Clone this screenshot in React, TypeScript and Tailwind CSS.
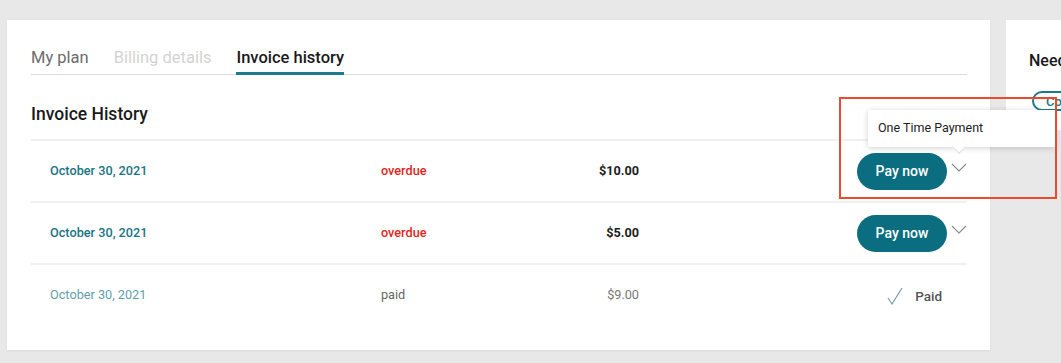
import { type ReactNode } from "react";

type Invoice = {
  date: string;
  status: "overdue" | "paid";
  amount: string;
};

const invoices: Invoice[] = [
  { date: "October 30, 2021", status: "overdue", amount: "$10.00" },
  { date: "October 30, 2021", status: "overdue", amount: "$5.00" },
  { date: "October 30, 2021", status: "paid", amount: "$9.00" },
];

const Chevron = () => (
  <svg width="16" height="9" viewBox="0 0 16 9" className="ml-[4px] -mt-[8px]">
    <polyline points="1,1 8,8 15,1" fill="none" stroke="#8a8a8a" strokeWidth="1.1" />
  </svg>
);

const Tooltip = () => (
  <div className="absolute right-[-88px] top-[-31px] w-[187px] h-[37px] bg-white shadow-[0_1px_6px_rgba(0,0,0,0.18)] flex items-center pl-[10px] text-[12.5px] text-[#222] z-10">
    One Time Payment
    <div className="absolute left-[86px] bottom-[-5px] w-[10px] h-[10px] bg-white rotate-45 border-r border-b border-[#e2e2e2]" />
  </div>
);

const Row = ({ invoice, children }: { invoice: Invoice; children?: ReactNode }) => {
  const paid = invoice.status === "paid";
  return (
    <div className="relative flex items-center h-[62px] border-t-2 border-[#f0f0f0] pl-[19px] text-[12.7px]">
      <div
        className={
          paid
            ? "w-[331px] text-[#5f9fac]"
            : "w-[331px] text-[#1b7486] font-medium"
        }
      >
        {invoice.date}
      </div>
      <div className={paid ? "w-[150px] text-[#666]" : "w-[150px] text-[#e1261c] font-medium"}>
        {invoice.status}
      </div>
      <div className={paid ? "w-[108px] text-right text-[#777]" : "w-[108px] text-right text-[#1d1d1d] font-bold"}>
        {invoice.amount}
      </div>
      <div className="flex-1 flex justify-end items-center">
        {paid ? (
          <div className="flex items-center mr-[25px] mt-[2px]">
            <svg width="16" height="18" viewBox="0 0 16 18">
              <polyline points="1,11 5,17 15,1" fill="none" stroke="#6b9aa5" strokeWidth="1.1" />
            </svg>
            <span className="ml-[12px] text-[13.5px] font-medium text-[#555]">Paid</span>
          </div>
        ) : (
          <div className="flex items-center">
            <button className="w-[90px] h-[37px] rounded-full bg-[#0b6e80] text-white text-[14px] font-medium">
              Pay now
            </button>
            <Chevron />
          </div>
        )}
      </div>
      {children}
    </div>
  );
};

export default function App() {
  return (
    <div className="relative w-[1061px] h-[363px] overflow-hidden bg-[#e8e8e8] font-['Roboto',sans-serif]">
      <div className="flex items-start gap-[16px] pt-[20px] pl-[7px]">
        <div className="w-[983px] h-[330px] shrink-0 bg-white shadow-[0_1px_2px_rgba(0,0,0,0.06)] pt-[27px] pl-[24px] pr-[23px]">
          <div className="flex gap-[25px] border-b border-[#dcdcdc] text-[16.5px] leading-[22px]">
            <div className="pb-[5px] text-[#6b6b6b]">My plan</div>
            <div className="pb-[5px] text-[#d3d3d3]">Billing details</div>
            <div className="pb-[2px] -mb-px border-b-[3px] border-[#1b7a8b] font-medium text-[#1a1a1a]">
              Invoice history
            </div>
          </div>
          <div className="h-[64px] pt-[14px] flex items-center text-[17.5px] font-medium text-[#1a1a1a]">
            Invoice History
          </div>
          <Row invoice={invoices[0]}>
            <Tooltip />
          </Row>
          <Row invoice={invoices[1]} />
          <Row invoice={invoices[2]} />
        </div>
        <div className="w-[260px] h-[110px] shrink-0 bg-white pt-[29px] pl-[23px]">
          <div className="text-[16px] font-medium text-[#1a1a1a]">Need help?</div>
          <button className="mt-[18px] ml-[3px] h-[20px] px-[12px] rounded-full border-2 border-[#1b7a8b] text-[13px] text-[#1b7a8b] font-medium leading-none">
            Contact us
          </button>
        </div>
      </div>
      <div className="absolute left-[839px] top-[97px] w-[218px] h-[102px] border-2 border-[#ec4a2f] pointer-events-none z-20" />
    </div>
  );
}
